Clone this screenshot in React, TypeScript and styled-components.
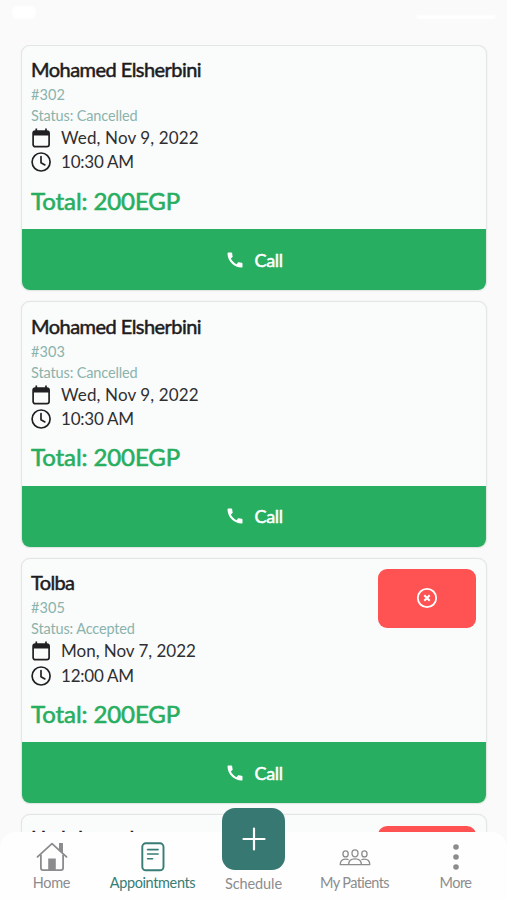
import React from 'react';
import styled, { createGlobalStyle } from 'styled-components';

const GlobalStyle = createGlobalStyle`
  * { box-sizing: border-box; }
  body { margin: 0; background: #fafafa; font-family: Lato, sans-serif; }
`;

const Screen = styled.div`
  height: 900px;
  display: flex;
  flex-direction: column;
  overflow: hidden;
  background: #fafafa;
`;

const StatusBar = styled.div`
  height: 44.6px;
  flex: none;
  display: flex;
  justify-content: space-between;
  align-items: flex-start;
  padding: 6px 11px 0 12px;
`;

const StatusMark = styled.span<{ $w: number; $h: number; $top?: number }>`
  width: ${p => p.$w}px;
  height: ${p => p.$h}px;
  margin-top: ${p => p.$top ?? 0}px;
  border-radius: 6px;
  background: #fff;
  filter: blur(1px);
`;

const List = styled.main`
  flex: 1;
  min-height: 0;
  overflow: hidden;
  display: flex;
  flex-direction: column;
  gap: 10px;
  padding: 0 20px 0 20.6px;
`;

const Card = styled.article`
  flex: none;
  height: 246.6px;
  display: flex;
  flex-direction: column;
  border: 1px solid #e2e7e6;
  border-radius: 9px;
  background: #fafbfb;
  box-shadow: 0 0 1.5px #dfe5e3;
  overflow: hidden;
`;

const CardBody = styled.div`
  flex: 1;
  display: flex;
  justify-content: space-between;
  padding: 10.4px 9.6px 0 9.5px;
`;

const Details = styled.div`
  display: flex;
  flex-direction: column;
  white-space: nowrap;
`;

const Name = styled.h2<{ $ls: number; $lift?: number }>`
  margin: ${p => -(p.$lift ?? 0)}px 0 2px;
  font-size: 20px;
  line-height: 26px;
  font-weight: 400;
  color: #1c1c1e;
  letter-spacing: ${p => p.$ls}px;
  -webkit-text-stroke: 0.5px currentColor;
`;

const Meta = styled.div<{ $ls: number }>`
  font-size: 14.5px;
  line-height: 21px;
  color: #8ab3ac;
  letter-spacing: ${p => p.$ls}px;
`;

const When = styled.div<{ $ls: number }>`
  height: 24.3px;
  display: flex;
  align-items: center;
  gap: 10px;
  font-size: 17px;
  line-height: 24px;
  color: #2f2f31;
  letter-spacing: ${p => p.$ls}px;
  svg { flex: none; color: #202022; }
`;

const Total = styled.div`
  margin-top: 10.2px;
  font-size: 24px;
  line-height: 32px;
  color: #27ae60;
  letter-spacing: -0.09px;
  -webkit-text-stroke: 0.6px currentColor;
`;

const CancelButton = styled.button`
  width: 98px;
  height: 58.5px;
  padding: 0;
  display: grid;
  place-items: center;
  border: 0;
  border-radius: 9px;
  background: #ff5252;
  color: #fff;
`;

const CallButton = styled.button`
  height: 61px;
  flex: none;
  display: flex;
  align-items: center;
  justify-content: center;
  gap: 9.5px;
  border: 0;
  padding: 0;
  border-radius: 0 0 6px 6px;
  background: #27ae60;
  color: #fff;
  font: 400 18px Lato, sans-serif;
  letter-spacing: -0.37px;
  -webkit-text-stroke: 0.5px #fff;
`;

const NavBar = styled.nav`
  flex: none;
  height: 68px;
  display: grid;
  grid-template-columns: repeat(5, 101px);
  grid-template-rows: 68px;
  justify-content: center;
  border-radius: 16px 16px 0 0;
  background: #fefefe;
`;

const NavItem = styled.a<{ $active?: boolean; $ls: number }>`
  display: flex;
  flex-direction: column;
  align-items: center;
  justify-content: flex-end;
  padding-bottom: 7px;
  font-size: 14.5px;
  line-height: 20px;
  white-space: nowrap;
  letter-spacing: ${p => p.$ls}px;
  color: ${p => (p.$active ? '#377c75' : '#8c8c8e')};
`;

const IconSlot = styled.span`
  height: 30px;
  margin-bottom: 1px;
  display: grid;
  place-items: center;
`;

const AddItem = styled(NavItem)`
  padding-bottom: 6px;
`;

const AddButton = styled.span`
  position: relative;
  flex: none;
  width: 62.5px;
  height: 62.5px;
  margin-bottom: 4px;
  display: grid;
  place-items: center;
  border-radius: 13px;
  background: #377872;
  color: #fff;
`;

const CalendarIcon = () => (
  <svg width="20" height="22" viewBox="0 0 20 22" fill="none">
    <rect x="2.1" y="4.1" width="16" height="15.6" rx="2.2" stroke="currentColor" strokeWidth="1.7" />
    <path d="M2.2 8.6V6a2 2 0 0 1 2-2h12a2 2 0 0 1 2 2v2.6z" fill="currentColor" />
    <path d="M5.3 1.5v3.5M15 1.5v3.5" stroke="currentColor" strokeWidth="1.7" />
  </svg>
);

const ClockIcon = () => (
  <svg width="20" height="20" viewBox="0 0 20 20" fill="none" stroke="currentColor" strokeWidth="1.7">
    <circle cx="10.1" cy="10" r="9" />
    <path d="M10 4.5v6.2l3.9 2.2" strokeLinecap="round" strokeLinejoin="round" />
  </svg>
);

const PhoneIcon = () => (
  <svg width="20" height="20" viewBox="0 0 24 24" fill="currentColor">
    <path d="M20.01 15.38c-1.23 0-2.42-.2-3.53-.56-.35-.12-.74-.03-1.01.24l-1.57 1.97c-2.83-1.35-5.48-3.9-6.89-6.83l1.95-1.66c.27-.28.35-.67.24-1.02-.37-1.11-.56-2.3-.56-3.53 0-.54-.45-.99-.99-.99H4.19C3.65 3 3 3.24 3 3.99 3 13.28 10.73 21 20.01 21c.71 0 .99-.63.99-1.18v-3.45c0-.54-.45-.99-.99-.99z" />
  </svg>
);

const CloseCircleIcon = () => (
  <svg width="22" height="22" viewBox="0 0 22 22" fill="none" stroke="currentColor">
    <circle cx="11" cy="11" r="9.2" strokeWidth="1.8" />
    <path d="M8.3 8.3l5.4 5.4M13.7 8.3l-5.4 5.4" strokeWidth="2.1" />
  </svg>
);

const HomeIcon = () => (
  <svg width="32" height="30" viewBox="0 0 32 30" fill="none" stroke="currentColor" strokeWidth="1.8">
    <path d="M1.5 14.8 16 1.7l14.5 13.1" strokeLinecap="round" strokeLinejoin="round" />
    <path d="M4.9 12.5v13.6a2 2 0 0 0 2 2h18.2a2 2 0 0 0 2-2V12.5" />
    <path d="M23 1h4v11l-4-3.6z" fill="currentColor" stroke="none" />
    <path d="M12.2 28V16.5h7.6V28z" fill="currentColor" stroke="none" />
  </svg>
);

const NoteIcon = () => (
  <svg width="24" height="30" viewBox="0 0 24 30" fill="none" stroke="currentColor" strokeWidth="1.9" strokeLinecap="round">
    <rect x="1.3" y="1.3" width="21.2" height="27" rx="3.5" />
    <path d="M6.6 7.6h10.5M6.6 12h10.5M6.6 16.7h5" strokeWidth="1.6" />
  </svg>
);

const PlusIcon = () => (
  <svg width="24" height="24" viewBox="0 0 24 24" stroke="currentColor" strokeWidth="2.2" strokeLinecap="round">
    <path d="M12 1.5v21M1.5 12h21" />
  </svg>
);

const PeopleIcon = () => (
  <svg width="32" height="17" viewBox="0 0 34 18" fill="none" stroke="currentColor" strokeWidth="1.4" strokeLinejoin="round">
    <ellipse cx="17" cy="4.6" rx="3.2" ry="3.7" />
    <ellipse cx="7" cy="5.2" rx="2.8" ry="3.2" />
    <ellipse cx="27" cy="5.2" rx="2.8" ry="3.2" />
    <path d="M10.2 16.6c0-4.3 2.5-6.2 6.8-6.2s6.8 1.9 6.8 6.2z" />
    <path d="M10.2 11.4c-.8-.4-1.7-.6-2.9-.6-3.8 0-6 1.7-6 5.800h8.500M23.800 11.400c.8-.4 1.700-.6 2.900-.6 3.800 0 6 1.700 6 5.800h-8.500" />
  </svg>
);

const MoreIcon = () => (
  <svg width="8" height="28" viewBox="0 0 8 28" fill="currentColor">
    <circle cx="4" cy="4" r="2.8" />
    <circle cx="4" cy="14" r="2.8" />
    <circle cx="4" cy="24" r="2.8" />
  </svg>
);

interface Appointment {
  id: number;
  name: string;
  nameLs: number;
  nameLift?: number;
  status: string;
  statusLs: number;
  date: string;
  dateLs: number;
  time: string;
  cancellable?: boolean;
}

const appointments: Appointment[] = [
  { id: 302, name: 'Mohamed Elsherbini', nameLs: -0.55, status: 'Cancelled', statusLs: -0.14, date: 'Wed, Nov 9, 2022', dateLs: 0.12, time: '10:30 AM' },
  { id: 303, name: 'Mohamed Elsherbini', nameLs: -0.55, status: 'Cancelled', statusLs: -0.14, date: 'Wed, Nov 9, 2022', dateLs: 0.12, time: '10:30 AM' },
  { id: 305, name: 'Tolba', nameLs: -0.71, status: 'Accepted', statusLs: -0.15, date: 'Mon, Nov 7, 2022', dateLs: -0.03, time: '12:00 AM', cancellable: true },
  { id: 306, name: 'Hady hamed', nameLs: -0.8, nameLift: 2, status: 'Accepted', statusLs: -0.15, date: 'Mon, Nov 7, 2022', dateLs: -0.03, time: '12:00 AM', cancellable: true },
];

const AppointmentCard = ({ item }: { item: Appointment }) => (
  <Card>
    <CardBody>
      <Details>
        <Name $ls={item.nameLs} $lift={item.nameLift}>{item.name}</Name>
        <Meta $ls={0.05}>#{item.id}</Meta>
        <Meta $ls={item.statusLs}>Status: {item.status}</Meta>
        <When $ls={item.dateLs}><CalendarIcon />{item.date}</When>
        <When $ls={-0.25}><ClockIcon />{item.time}</When>
        <Total>Total: 200EGP</Total>
      </Details>
      {item.cancellable && <CancelButton aria-label="Cancel"><CloseCircleIcon /></CancelButton>}
    </CardBody>
    <CallButton><PhoneIcon />Call</CallButton>
  </Card>
);

export default function App() {
  return (
    <Screen>
      <GlobalStyle />
      <StatusBar>
        <StatusMark $w={24} $h={13} />
        <StatusMark $w={80} $h={4} $top={9} />
      </StatusBar>
      <List>
        {appointments.map(item => <AppointmentCard key={item.id} item={item} />)}
      </List>
      <NavBar>
        <NavItem $ls={-0.29}><IconSlot><HomeIcon /></IconSlot>Home</NavItem>
        <NavItem $active $ls={-0.37}><IconSlot><NoteIcon /></IconSlot>Appointments</NavItem>
        <AddItem $ls={-0.1}><AddButton><PlusIcon /></AddButton>Schedule</AddItem>
        <NavItem $ls={-0.6}><IconSlot><PeopleIcon /></IconSlot>My Patients</NavItem>
        <NavItem $ls={-0.52}><IconSlot><MoreIcon /></IconSlot>More</NavItem>
      </NavBar>
    </Screen>
  );
}
